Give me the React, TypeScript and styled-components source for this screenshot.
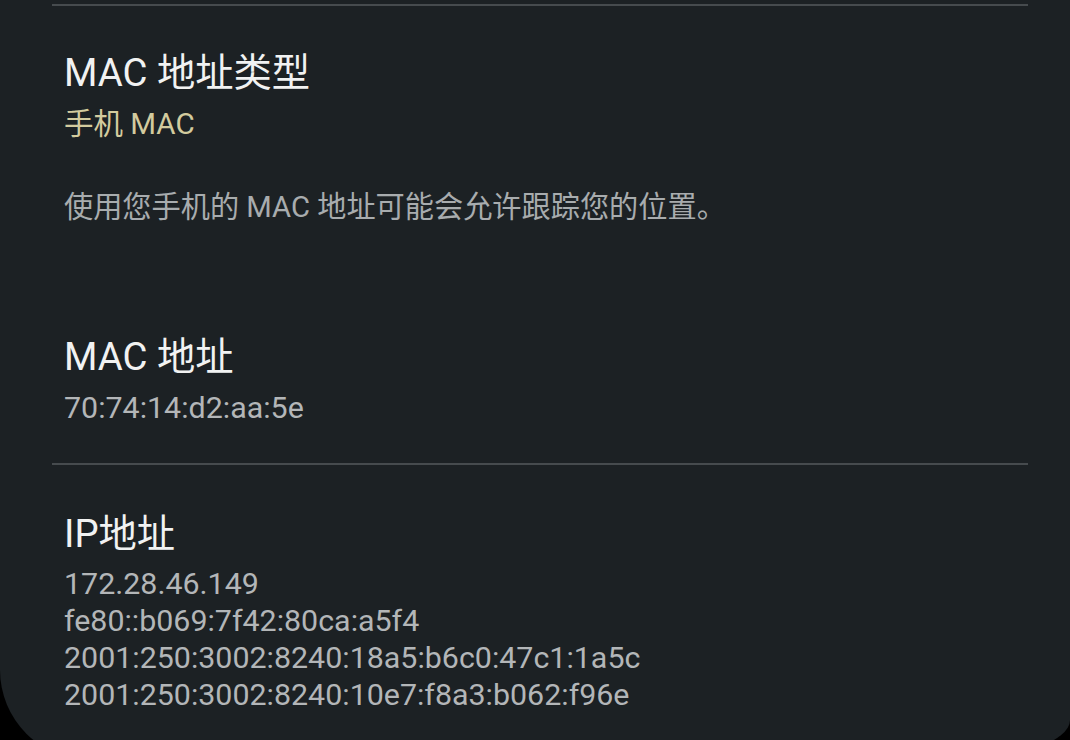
import React from "react";
import styled, { createGlobalStyle } from "styled-components";

const GlobalStyle = createGlobalStyle`
  html, body {
    margin: 0;
    padding: 0;
    background: #000000;
    overflow: hidden;
  }
  #root {
    width: 1070px;
    height: 740px;
    overflow: hidden;
  }
`;

const Card = styled.div`
  width: 1070px;
  height: 760px;
  background: #1c2124;
  border-bottom-left-radius: 90px;
  border-bottom-right-radius: 120px 40px;
  display: flex;
  flex-direction: column;
  font-family: Roboto, "Noto Sans CJK SC", sans-serif;
`;

const Divider = styled.div<{ $top: number }>`
  height: 2px;
  margin: ${(p) => p.$top}px 42px 0 52px;
  background: #464b4e;
`;

const Item = styled.section<{ $top: number }>`
  display: flex;
  flex-direction: column;
  padding: ${(p) => p.$top}px 40px 0 64px;
`;

const Title = styled.div`
  color: #f1f2f2;
  font-size: 38.3px;
  line-height: 48px;
  white-space: nowrap;
`;

const Summary = styled.div<{ $gap: number }>`
  margin-top: ${(p) => p.$gap}px;
  color: #d3cb9e;
  font-size: 29.5px;
  line-height: 37px;
  white-space: nowrap;
`;

const Description = styled.div`
  margin-top: 46px;
  color: #a8acae;
  font-size: 29.2px;
  line-height: 37px;
  white-space: nowrap;
`;

const Values = styled.div<{ $gap: number }>`
  margin-top: ${(p) => p.$gap}px;
  display: flex;
  flex-direction: column;
`;

const Value = styled.div`
  color: #b3b6b8;
  font-size: 30.4px;
  line-height: 37px;
  white-space: nowrap;
`;

const ipLines = [
  "172.28.46.149",
  "fe80::b069:7f42:80ca:a5f4",
  "2001:250:3002:8240:18a5:b6c0:47c1:1a5c",
  "2001:250:3002:8240:10e7:f8a3:b062:f96e",
];

export default function App() {
  return (
    <>
      <GlobalStyle />
      <Card>
        <Divider $top={4} />
        <Item $top={43}>
          <Title>MAC 地址类型</Title>
          <Summary $gap={9}>手机 MAC</Summary>
          <Description>使用您手机的 MAC 地址可能会允许跟踪您的位置。</Description>
        </Item>
        <Item $top={107}>
          <Title>MAC 地址</Title>
          <Values $gap={8}>
            <Value>70:74:14:d2:aa:5e</Value>
          </Values>
        </Item>
        <Divider $top={37} />
        <Item $top={45}>
          <Title>IP地址</Title>
          <Values $gap={7}>
            {ipLines.map((line) => (
              <Value key={line}>{line}</Value>
            ))}
          </Values>
        </Item>
      </Card>
    </>
  );
}
